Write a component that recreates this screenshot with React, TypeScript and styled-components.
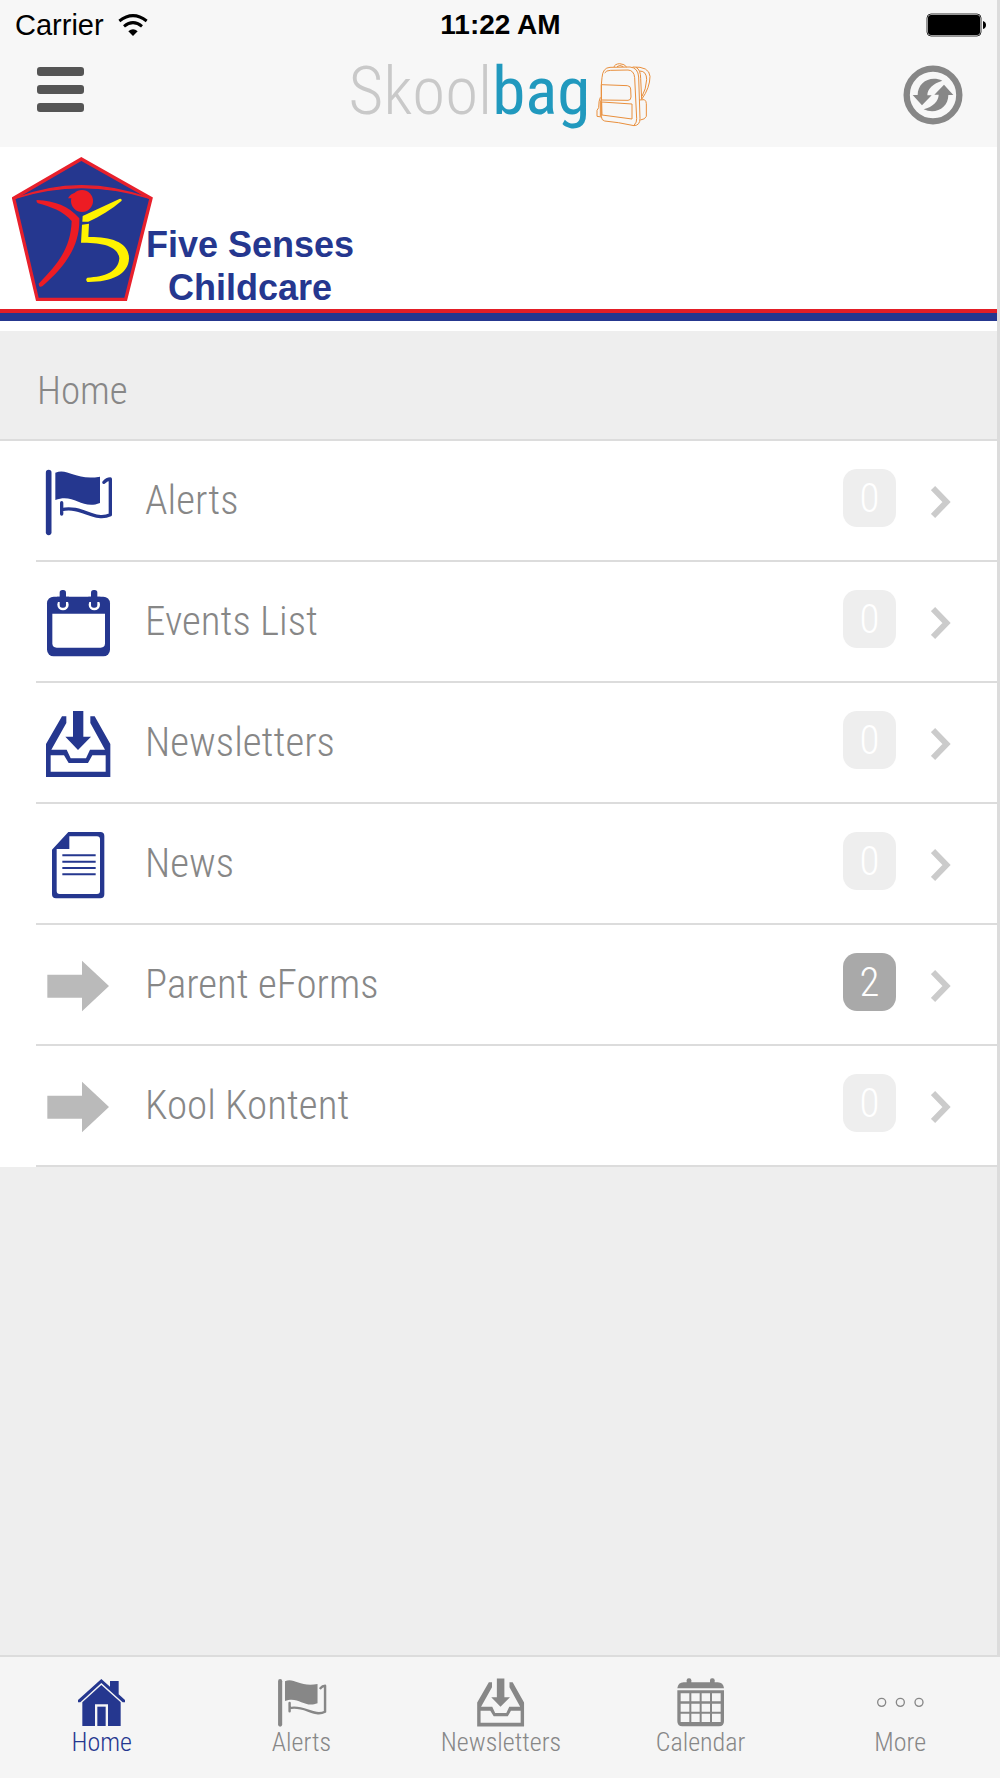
import React from "react";
import styled, { createGlobalStyle } from "styled-components";

const colors = {
  navy: "#25378f",
  grey: "#878787",
  line: "#dcdcdc",
  page: "#eeeeee",
  bar: "#f7f7f7",
};

const condensed = '"Roboto Condensed", Roboto, sans-serif';
const helvetica = '"Liberation Sans", Arial, sans-serif';

const GlobalStyle = createGlobalStyle`
  *, *::before, *::after { box-sizing: border-box; }
  body { margin: 0; background: ${colors.page}; }
  svg { display: block; flex: none; }
`;

const Page = styled.div`
  display: flex;
  flex-direction: column;
  min-height: 100vh;
  font-family: ${condensed};
  font-weight: 300;
  color: ${colors.grey};
`;

const Screen = styled.div`
  flex: 1;
  border-right: 3px solid ${colors.line};
`;

const Header = styled.header`
  background: ${colors.bar};
`;

const StatusBar = styled.div`
  display: grid;
  grid-template-columns: 1fr auto 1fr;
  align-items: center;
  height: 50px;
  padding: 0 11px 0 15px;
  font-family: ${helvetica};
  font-weight: 400;
  font-size: 29px;
  line-height: 32px;
  color: #000;
`;

const Carrier = styled.div`
  display: flex;
  align-items: center;
  gap: 14px;
`;

const Clock = styled.time`
  font-weight: 700;
  font-size: 28px;
`;

const Battery = styled.div`
  justify-self: end;
`;

const NavBar = styled.div`
  display: grid;
  grid-template-columns: 1fr auto 1fr;
  align-items: center;
  height: 97px;
  padding: 0 34px 7px 37px;
`;

const IconButton = styled.button<{ $end?: boolean }>`
  justify-self: ${(p) => (p.$end ? "end" : "start")};
  padding: 0;
  border: 0;
  background: none;
  cursor: pointer;
`;

const Brand = styled.div`
  display: flex;
  align-items: center;
  gap: 6px;
`;

const BrandName = styled.span`
  padding-bottom: 8px;
  font-weight: 300;
  font-size: 67px;
  line-height: 76px;
  color: #c9c9c9;
`;

const BrandAccent = styled.span`
  font-weight: 400;
  color: #2199be;
`;

const Banner = styled.div`
  padding: 10px 0;
  background: #fff;
`;

const BannerTitle = styled.div`
  display: flex;
  align-items: flex-end;
  padding: 0 12px;
`;

const CrestBox = styled.div`
  padding-bottom: 8px;
`;

const School = styled.h1`
  margin: 0 0 0 -7px;
  font-family: ${helvetica};
  font-weight: 700;
  font-size: 36px;
  line-height: 43px;
  text-align: center;
  color: ${colors.navy};
`;

const Stripe = styled.div`
  height: 12px;
  border-top: 4px solid #e31e26;
  background: ${colors.navy};
`;

const SectionTitle = styled.h2`
  display: flex;
  align-items: center;
  height: 110px;
  margin: 0;
  padding: 12px 37px 0;
  border-bottom: 2px solid ${colors.line};
  font-weight: 300;
  font-size: 39px;
  line-height: 48px;
`;

const List = styled.ul`
  margin: 0;
  padding: 0 0 0 36px;
  list-style: none;
  background: #fff;
`;

const Row = styled.a`
  display: flex;
  align-items: center;
  height: 121px;
  padding: 2px 46px 0 7px;
  border-bottom: 2px solid ${colors.line};
  color: inherit;
  text-decoration: none;
`;

const RowLabel = styled.span`
  flex: 1;
  padding: 0 0 4px 32px;
  font-size: 41px;
  line-height: 48px;
`;

const Badge = styled.span<{ $active: boolean }>`
  width: 53px;
  height: 58px;
  margin: 0 35px 8px 0;
  border-radius: 14px;
  background: ${(p) => (p.$active ? "#a9a9a9" : "#eeeeee")};
  font-size: 41px;
  line-height: 58px;
  text-align: center;
  color: #fff;
`;

const TabBar = styled.nav`
  display: grid;
  grid-template-columns: repeat(5, 1fr);
  height: 123px;
  padding-left: 2px;
  border-top: 2px solid ${colors.line};
  background: #f5f5f5;
`;

const Tab = styled.a<{ $active: boolean }>`
  display: flex;
  flex-direction: column;
  align-items: center;
  padding-top: 20px;
  font-size: 26px;
  line-height: 28px;
  color: ${(p) => (p.$active ? colors.navy : colors.grey)};
  text-decoration: none;
`;

type IconProps = { size: number; color?: string };

const FlagIcon = ({ size, color = "currentColor" }: IconProps) => (
  <svg width={size} height={size} viewBox="129 426 210 210" fill="none" aria-hidden="true">
    <path d="M146 443V622" stroke={color} strokeWidth="17" strokeLinecap="round" />
    <path d="M166 443C205 428 225 468 300 455V534C245 556 222 503 166 525Z" fill={color} />
    <path
      d="M312 472Q320 462 331 462V569C285 592 245 540 185 554M185 533V567"
      stroke={color}
      strokeWidth="10"
      strokeLinecap="round"
      strokeLinejoin="round"
    />
  </svg>
);

const EventsIcon = ({ size, color = "currentColor" }: IconProps) => (
  <svg width={size} height={size} viewBox="129 84 210 210" fill={color} aria-hidden="true">
    <rect x="141" y="110" width="189" height="179" rx="20" />
    <path d="M157 161H315V250Q315 263 302 263H170Q157 263 157 250Z" fill="#fff" />
    <circle cx="189" cy="134" r="17" fill="#fff" />
    <circle cx="283" cy="134" r="17" fill="#fff" />
    <path d="M171 110H207V126H171ZM265 110H301V126H265Z" />
    <rect x="179" y="90" width="19" height="53" rx="8" />
    <rect x="273" y="90" width="19" height="53" rx="8" />
  </svg>
);

const InboxIcon = ({ size, color = "currentColor" }: IconProps) => (
  <svg width={size} height={size} viewBox="130 447 210 210" fill={color} aria-hidden="true">
    <path d="M220 453H251V530H274L235 570L197 530H220Z" />
    <path
      fillRule="evenodd"
      d="M187 469H200V489L155 569H201L213 595H259L271 569H316L272 489V469H285L332 552V651H139V552ZM153 586V635H318V586H278L265 609H207L193 586Z"
    />
  </svg>
);

const NewsIcon = ({ size, color = "currentColor" }: IconProps) => (
  <svg width={size} height={size} viewBox="130 88 210 210" fill={color} aria-hidden="true">
    <path
      fillRule="evenodd"
      d="M206 94H302Q314 94 314 106V281Q314 293 302 293H169Q157 293 157 281V147ZM209 107V145H171V271Q171 280 180 280H292Q301 280 301 271V116Q301 107 292 107Z"
    />
    <path d="M188 164H288M188 183H288M188 202H288M188 221H288" stroke={color} strokeWidth="6" />
  </svg>
);

const ArrowIcon = ({ size, color = "currentColor" }: IconProps) => (
  <svg width={size} height={size} viewBox="130 451 210 210" fill={color} aria-hidden="true">
    <path d="M143 522H247V480L328 556L247 632V591H143Z" />
  </svg>
);

const HomeIcon = ({ size, color = "currentColor" }: IconProps) => (
  <svg width={size} height={size} viewBox="228 113 153 153" fill={color} aria-hidden="true">
    <path d="M304 119L330 142V125H356V165L375 182V189H368L304 131L241 189H234V182Z" />
    <path d="M304 137L362 189V260H324V195H285V260H247V189Z" />
    <path d="M292 202H317V260H292Z" />
  </svg>
);

const CalendarIcon = ({ size, color = "currentColor" }: IconProps) => (
  <svg width={size} height={size} viewBox="532 113 153 153" fill={color} aria-hidden="true">
    <rect x="567" y="117" width="14" height="20" rx="6" />
    <rect x="637" y="117" width="14" height="20" rx="6" />
    <path d="M539 147Q541 129 558 129H660Q677 129 679 147Z" />
    <path
      fillRule="evenodd"
      d="M539 153H679V246Q679 261 664 261H554Q539 261 539 246ZM549 162V186H575V162ZM581 162V186H606V162ZM612 162V186H637V162ZM643 162V186H669V162ZM549 193V217H575V193ZM581 193V217H606V193ZM612 193V217H637V193ZM643 193V217H669V193ZM549 223V248H575V223ZM581 223V248H606V223ZM612 223V248H637V223ZM643 223V248H669V223Z"
    />
  </svg>
);

const MoreIcon = ({ size, color = "currentColor" }: IconProps) => (
  <svg width={size} height={size} viewBox="1127 113 153 153" fill="none" stroke={color} strokeWidth="4" aria-hidden="true">
    <circle cx="1147" cy="189" r="12" />
    <circle cx="1203" cy="189" r="12" />
    <circle cx="1259" cy="189" r="12" />
  </svg>
);

const WifiIcon = () => (
  <svg width="30" height="22" viewBox="355 38 90 66" fill="none" stroke="#000" strokeWidth="9" aria-hidden="true">
    <path d="M359 59Q400 27 441 59" />
    <path d="M373 75Q400 53 427 75" />
    <path d="M386 90Q400 77 414 90L400 104Z" fill="#000" stroke="none" />
  </svg>
);

const BatteryIcon = () => (
  <svg width="60" height="24" viewBox="0 0 60 24" aria-hidden="true">
    <rect x="1" y="1" width="54" height="22" rx="4" fill="#fff" stroke="#333" />
    <rect x="2" y="2" width="52" height="20" rx="3" />
    <path d="M57 8Q60 9 60 12T57 16Z" />
  </svg>
);

const MenuIcon = () => (
  <svg width="47" height="56" viewBox="0 0 47 56" fill="#555" aria-hidden="true">
    <rect width="47" height="9" rx="3" />
    <rect y="18" width="47" height="9" rx="3" />
    <rect y="36" width="47" height="9" rx="3" />
  </svg>
);

const refreshArrow = "M1326 241C1290 224 1252 246 1252 284H1237L1265 315L1294 285H1281C1281 266 1298 249 1326 241Z";

const RefreshIcon = () => (
  <svg width="60" height="60" viewBox="1208 194 180 180" fill="#878787" aria-hidden="true">
    <circle cx="1298" cy="284" r="79" fill="none" stroke="#878787" strokeWidth="19" />
    <path d={refreshArrow} />
    <path d={refreshArrow} transform="rotate(180 1298 284)" />
  </svg>
);

const BackpackIcon = () => (
  <svg
    width="55"
    height="64"
    viewBox="66 38 165 192"
    fill="none"
    stroke="#e98f3c"
    strokeWidth="3"
    strokeLinejoin="round"
    aria-hidden="true"
  >
    <path d="M82 103L84 82Q86 52 108 51L168 50Q192 52 194 80L198 205Q198 225 180 226Q130 215 92 212Q82 210 82 198Z" />
    <path d="M92 68Q96 60 110 60L162 59Q180 60 182 82L188 205Q189 216 180 225" />
    <path d="M120 50Q122 41 137 40Q152 41 158 50M129 49Q137 42 148 49" />
    <path d="M82 103L160 106Q170 107 170 116L171 140Q171 150 162 150L82 149Z" />
    <path d="M83 155L174 161V206L84 194Z" />
    <path d="M79 141Q74 150 74 172L69 180V198L83 200M79 150V198" />
    <path d="M176 50Q226 48 228 78Q228 112 203 147M197 62Q218 62 218 88Q216 118 204 138M186 51Q200 58 200 84L203 147" />
    <path d="M195 149L211 148Q217 152 217 160V198Q214 207 199 209" />
  </svg>
);

const ChevronIcon = () => (
  <svg width="20" height="34" viewBox="0 0 20 34" fill="none" stroke="#cbcbcb" strokeWidth="6" aria-hidden="true">
    <path d="M2 3L15.500 17L2 31" />
  </svg>
);

const SchoolCrest = () => (
  <svg width="141" height="144" viewBox="36 36 423 432" fill="none" aria-hidden="true">
    <path d="M244 42L453 160L377 463H112L41 160Z" fill="#25378f" stroke="#e8202c" strokeWidth="10" />
    <path d="M42 161Q145 122 245 122T453 161Q345 128 245 128T42 161Z" fill="#e8202c" stroke="#e8202c" strokeWidth="4" />
    <circle cx="246" cy="168" r="33" fill="#ed1c24" />
    <path d="M204 160Q212 144 230 143L222 160Z" fill="#ed1c24" />
    <path
      d="M110 165C165 168 205 182 238 220C240 300 200 360 128 423Q117 430 116 416C175 355 212 310 215 228C190 198 150 185 114 175Q108 171 110 165Z"
      fill="#ed1c24"
    />
    <path d="M248 213L358 162Q366 160 365 167C335 193 300 214 265 230H247Z" fill="#fff200" />
    <path
      d="M246 239L267 236L265 276C330 275 387 290 387 340C386 390 330 412 262 411Q255 404 262 398C315 396 355 380 358 340C355 305 310 292 243 293Z"
      fill="#fff200"
    />
  </svg>
);

type MenuItem = { label: string; count: number; Icon: React.FC<IconProps>; color: string };

const items: MenuItem[] = [
  { label: "Alerts", count: 0, Icon: FlagIcon, color: colors.navy },
  { label: "Events List", count: 0, Icon: EventsIcon, color: colors.navy },
  { label: "Newsletters", count: 0, Icon: InboxIcon, color: colors.navy },
  { label: "News", count: 0, Icon: NewsIcon, color: colors.navy },
  { label: "Parent eForms", count: 2, Icon: ArrowIcon, color: "#bababa" },
  { label: "Kool Kontent", count: 0, Icon: ArrowIcon, color: "#bababa" },
];

const tabs: { label: string; Icon: React.FC<IconProps> }[] = [
  { label: "Home", Icon: HomeIcon },
  { label: "Alerts", Icon: FlagIcon },
  { label: "Newsletters", Icon: InboxIcon },
  { label: "Calendar", Icon: CalendarIcon },
  { label: "More", Icon: MoreIcon },
];

export default function App() {
  return (
    <Page>
      <GlobalStyle />
      <Screen>
        <Header>
          <StatusBar>
            <Carrier>
              Carrier
              <WifiIcon />
            </Carrier>
            <Clock>11:22 AM</Clock>
            <Battery>
              <BatteryIcon />
            </Battery>
          </StatusBar>
          <NavBar>
            <IconButton type="button" aria-label="Menu">
              <MenuIcon />
            </IconButton>
            <Brand>
              <BrandName>
                Skool<BrandAccent>bag</BrandAccent>
              </BrandName>
              <BackpackIcon />
            </Brand>
            <IconButton type="button" aria-label="Refresh" $end>
              <RefreshIcon />
            </IconButton>
          </NavBar>
        </Header>
        <Banner>
          <BannerTitle>
            <CrestBox>
              <SchoolCrest />
            </CrestBox>
            <School>
              Five Senses
              <br />
              Childcare
            </School>
          </BannerTitle>
          <Stripe />
        </Banner>
        <main>
          <SectionTitle>Home</SectionTitle>
          <List>
            {items.map(({ label, count, Icon, color }) => (
              <li key={label}>
                <Row href="#">
                  <Icon size={70} color={color} />
                  <RowLabel>{label}</RowLabel>
                  <Badge $active={count > 0}>{count}</Badge>
                  <ChevronIcon />
                </Row>
              </li>
            ))}
          </List>
        </main>
      </Screen>
      <TabBar>
        {tabs.map(({ label, Icon }) => (
          <Tab key={label} href="#" $active={label === "Home"}>
            <Icon size={51} />
            {label}
          </Tab>
        ))}
      </TabBar>
    </Page>
  );
}
